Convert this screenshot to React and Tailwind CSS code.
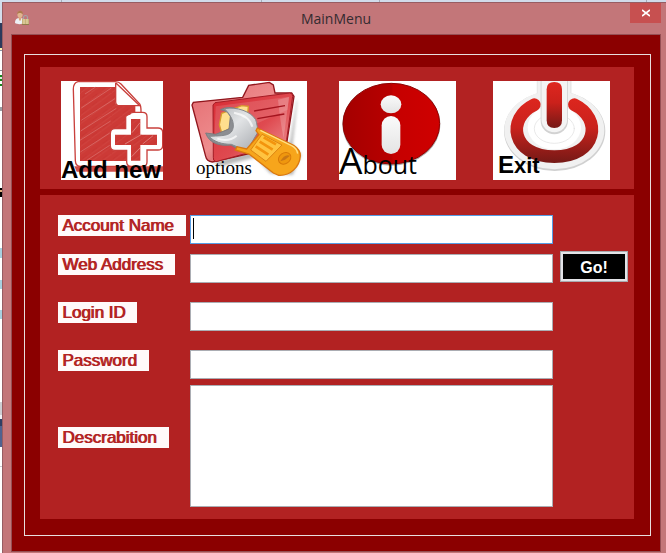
import React from "react";

const strip = [
  ["h-[23px]", "bg-[#d3ddeb]"], ["h-[25px]", "bg-[#2b3a5c]"], ["h-[2px]", "bg-[#fff2b0]"],
  ["h-[1px]", "bg-[#8a93a5]"], ["h-[19px]", "bg-white"], ["h-[1px]", "bg-[#8c9099]"],
  ["h-[4px]", "bg-white"], ["h-[2px]", "bg-[#15841a]"], ["h-[2px]", "bg-[#d9efd9]"],
  ["h-[2px]", "bg-[#15841a]"], ["h-[3px]", "bg-white"], ["h-[2px]", "bg-[#15841a]"],
  ["h-[21px]", "bg-white"], ["h-[4px]", "bg-[#9a9da3]"], ["h-[77px]", "bg-white"],
  ["h-[2px]", "bg-black"], ["h-[2px]", "bg-[#e0b080]"], ["h-[5px]", "bg-black"],
  ["h-[51px]", "bg-white"], ["h-[10px]", "bg-[#a8d0df]"], ["h-[22px]", "bg-white"],
  ["h-[9px]", "bg-[#a8d0df]"], ["h-[21px]", "bg-white"], ["h-[9px]", "bg-[#a8d0df]"],
  ["h-[83px]", "bg-white"], ["h-[13px]", "bg-[#cdced3]"], ["h-[4px]", "bg-[#eef0f5]"],
  ["h-[7px]", "bg-[#2f3e63]"], ["h-[21px]", "bg-[#4f6290]"], ["h-[19px]", "bg-white"],
  ["h-[1px]", "bg-[#c9cbd0]"],
];

function UserIcon() {
  return (
    <svg className="h-4 w-4" viewBox="0 0 16 16" aria-hidden="true">
      <path d="M1 13c0-4 2-5 5-5s4 2 4 5c-2 1.5-7 1.5-9 0Z" fill="#edf0f5" />
      <path d="M4.5 7h3l-.5 3-1 1-1-1Z" fill="#d9a67d" />
      <ellipse cx="6" cy="4.5" rx="2.6" ry="3.3" fill="#e0b58f" />
      <path d="M3.2 4.5C2.5 0 9.5-.8 8.9 4.2 7.5 3 5 2 3.2 4.5Z" fill="#ad7a4e" />
      <path d="M9.5 9V7.5c0-2.6 4-2.6 4 0V9" fill="none" stroke="#a5a5a5" strokeWidth="1.1" />
      <rect x="8" y="9" width="7" height="6" fill="#c7b17a" />
      <path d="M10 9v6M13 9v6" stroke="#eadcae" />
      <path d="M8 14.5h7" stroke="#8f7b4a" />
    </svg>
  );
}

function AddArt() {
  const cross = "M240 132q3-5 12-5h26q13 0 13 13v34h33q14 0 14 13v40q0 13-14 13h-33v36q0 13-13 13h-33q-15 0-15-13v-35h-35q-14 0-14-14v-36q0-15 14-15h32v-35q0-5 13-9Z";
  return (
    <svg className="block h-full w-full" viewBox="33 33 306 297" preserveAspectRatio="none" aria-hidden="true">
      <defs>
        <pattern id="sketch" width="31" height="23" patternUnits="userSpaceOnUse">
          <rect width="31" height="23" fill="#cc3a36" />
          <path d="M-2 23 31-1" stroke="#d4524d" strokeWidth="1.3" />
          <path d="M2 14 18 2" stroke="#c6322f" strokeWidth="2" />
        </pattern>
      </defs>
      <path d="M73 289h266v16H80Z" fill="#c9302c" opacity=".85" />
      <path d="M84 35h112q10 0 17 7l56 60q4 5 4 22v148q0 17-16 17H92q-15 0-16-17L70 58q0-20 14-23Z" fill="#fff" stroke="#c9403c" strokeWidth="4" />
      <path d="M90 51h106v44q0 13 13 13h47v165H90Z" fill="url(#sketch)" />
      <path d="M105 72 137 51M94 114l90-60M94 151l101-65M92 183l107-68M90 211l92-58M91 246l93-60M110 271l80-52" stroke="#e29995" strokeWidth="1.3" />
      <path d="M197 38v57q0 12 12 12h61L205 40Z" fill="#fff" />
      <path d="M197 38v57q0 12 12 12h61M197 38l73 70" fill="none" stroke="#c9403c" strokeWidth="4" />
      <path d={cross} fill="#fff" stroke="#c9403c" strokeWidth="4" />
      <path d="M243 147h28v47h50v31h-50v47h-28v-47h-48v-31h48Z" fill="url(#sketch)" />
      <path d="m246 188 24-30M225 222l50-29M278 222l31-25M245 260l25-26" stroke="#e49a96" strokeWidth="2" />
    </svg>
  );
}

function OptionsArt() {
  return (
    <svg className="block h-full w-full" viewBox="30 33 351 297" preserveAspectRatio="none" aria-hidden="true">
      <defs>
        <linearGradient id="folderBack" x1="0" y1="0" x2="1" y2="1">
          <stop offset="0" stopColor="#e46b70" /><stop offset=".5" stopColor="#ee8d8e" /><stop offset="1" stopColor="#a91d25" />
        </linearGradient>
        <linearGradient id="folderFront" x1="0" y1="0" x2="1" y2="1">
          <stop offset="0" stopColor="#d82b34" /><stop offset=".55" stopColor="#df4a50" /><stop offset="1" stopColor="#f0a0a1" />
        </linearGradient>
        <linearGradient id="steel" x1="0" y1="0" x2="1" y2="1">
          <stop offset="0" stopColor="#aeb1b5" /><stop offset=".45" stopColor="#e2e4e6" /><stop offset="1" stopColor="#a5a8ad" />
        </linearGradient>
        <filter id="softShade"><feGaussianBlur stdDeviation="5" /></filter>
      </defs>
      <path d="m100 275 230-60 20-125 2 3-14 130 26 32-26 60-68-5-42-48-105 27Z" fill="#888" opacity=".6" filter="url(#softShade)" />
      <path d="m36 105 4-8 148-15 18-36 62-9 12 8 5 24 50 0 7 10-23 147-222 50q-17-2-20-17Z" fill="url(#folderBack)" stroke="#91161d" strokeWidth="4" />
      <path d="m99 105 6-7 224-29q10 0 9 10l-18 130q-2 9-11 11L108 275q-10-3-8-13Z" fill="url(#folderFront)" stroke="#a51c25" strokeWidth="3" />
      <path d="m107 109 221-29-5 39-220 99Z" fill="#fff" opacity=".13" />
      <path d="M294 89q7 70 17 116l16-124Z" fill="#fff" opacity=".2" />
      <path d="m222 123 93-16M232 146l81-14" stroke="#a4141e" strokeWidth="4" />
      <path d="m125 130 60-23 20 2-3 35-77 45-7-25Z" fill="#ffdf8e" stroke="#d79b2e" strokeWidth="4" />
      <path d="M121 119c32-16 69 1 86 23 12 14 14 22 26 36l-46 67-34-20c-27 4-65-2-76-36l30 4 40-16 4-37q-7-18-30-21Z" fill="#8c8e92" stroke="#7b7d81" strokeWidth="3" />
      <path d="M133 116c38-7 80 9 94 33 5 13 3 24 10 32l-37 62-46-20c-27 0-51-7-67-24 24-2 55 1 67-13 13-18 5-45-21-70Z" fill="url(#steel)" stroke="#85888c" strokeWidth="3" />
      <path d="M162 128q46 9 55 42M112 206q34 11 58-9" stroke="#fff" strokeWidth="6" fill="none" opacity=".7" />
      <path d="m232 174 109 52q20 13 20 31c-2 33-29 61-65 59l-16-7-73-57-41-12 5-10 29 7 37-43-9-12Z" fill="#f7a51b" stroke="#da780f" strokeWidth="4" />
      <path d="m246 193 60 32-48 49-46-34Z" fill="#ffc340" stroke="#dc8513" strokeWidth="3" />
      <path d="m251 202 37 21M239 215l39 24M227 229l38 25" stroke="#f3940d" strokeWidth="8" />
      <ellipse cx="314" cy="265" rx="20" ry="16" transform="rotate(-35 314 265)" fill="#ef970e" stroke="#d87a08" strokeWidth="3" />
      <path d="M301 274q13-24 29-17l-15 12Z" fill="#c97715" />
      <path d="m241 181 94 46q16 8 18 24" fill="none" stroke="#ffe084" strokeWidth="4" />
    </svg>
  );
}

function AboutArt() {
  return (
    <svg className="block h-full w-full" viewBox="27 33 351 297" preserveAspectRatio="none" aria-hidden="true">
      <defs>
        <linearGradient id="infoRed"><stop offset="0" stopColor="#a40000" /><stop offset=".5" stopColor="#b80000" /><stop offset=".52" stopColor="#c50000" /><stop offset="1" stopColor="#cf0000" /></linearGradient>
        <linearGradient id="infoWhite" x1="0" y1="0" x2="0" y2="1"><stop stopColor="#fafafa" /><stop offset="1" stopColor="#e4e4e4" /></linearGradient>
      </defs>
      <ellipse cx="184" cy="163" rx="147" ry="124" fill="#aaa" />
      <ellipse cx="184" cy="161" rx="145" ry="121" fill="url(#infoRed)" stroke="#920000" strokeWidth="3" />
      <ellipse cx="183" cy="103" rx="31" ry="27" fill="url(#infoWhite)" />
      <rect x="155" y="138" width="56" height="114" rx="28" fill="url(#infoWhite)" />
    </svg>
  );
}

function ExitArt() {
  return (
    <svg className="block h-full w-full" viewBox="24 33 351 297" preserveAspectRatio="none" aria-hidden="true">
      <defs>
        <linearGradient id="powerRed" gradientUnits="userSpaceOnUse" x1="0" y1="85" x2="0" y2="280"><stop stopColor="#dd261e" /><stop offset=".45" stopColor="#c9221c" /><stop offset="1" stopColor="#741916" /></linearGradient>
        <linearGradient id="stemRed" gradientUnits="userSpaceOnUse" x1="0" y1="35" x2="0" y2="175"><stop stopColor="#df271f" /><stop offset=".45" stopColor="#cb211b" /><stop offset="1" stopColor="#741916" /></linearGradient>
      </defs>
      <g strokeLinecap="round">
        <ellipse cx="209" cy="183" rx="152" ry="120" fill="#d0d0d0" />
        <path d="M158 30h100v60H158Z" fill="#f1f1f1" stroke="#d8d8d8" strokeWidth="2" />
        <ellipse cx="208" cy="180" rx="150" ry="118" fill="#f1f1f1" />
        <ellipse cx="208" cy="172" rx="80" ry="66" fill="#fff" />
        <ellipse cx="208" cy="176" rx="60" ry="44" fill="#fff" stroke="#dedede" strokeWidth="2" />
        <path d="M208 33V152" stroke="#d2d2d2" strokeWidth="82" />
        <path d="M208 32V148" stroke="#f4f4f4" strokeWidth="77" />
        <path d="M148 104C64 144 78 260 208 260S352 144 268 104" fill="none" stroke="url(#powerRed)" strokeWidth="38" />
        <path d="M185 58q0-22 23-22t23 22v93q0 23-23 23t-23-23Z" fill="url(#stemRed)" />
      </g>
    </svg>
  );
}

function Tile({ art, className, caption }) {
  return (
    <button type="button" className={`relative block h-[99px] bg-white text-black ${className}`}>
      {art}
      {caption}
    </button>
  );
}

const labelClass = "justify-self-start bg-[#fffafa] pr-3 pl-1 pt-px text-[17px] leading-5 whitespace-nowrap text-[#b22222] [text-shadow:1px_0_0_#b22222]";
const inputClass = "h-[29px] w-full min-w-0 border bg-white px-1 text-[16px] text-black outline-none";

function Field({ id, label, type = "text", active, className, children }) {
  return (
    <div className={`grid grid-cols-[132px_minmax(0,1fr)_75px] items-start ${className}`}>
      <label htmlFor={id} className={labelClass}>{label}</label>
      <div className="relative">
        <input id={id} type={type} className={`${inputClass} ${active ? "border-[#569de5]" : "border-[#abadb3]"}`} />
        {active && <span className="absolute top-[3px] left-[3px] h-[21px] w-px bg-black" />}
      </div>
      {children}
    </div>
  );
}

export default function App() {
  return (
    <div className="flex min-h-screen overflow-hidden bg-white font-['Liberation_Sans',Arial,sans-serif]">
      <div className="w-[2px] shrink-0" aria-hidden="true">
        {strip.map(([height, color], i) => <div key={i} className={`${height} ${color}`} />)}
      </div>
      <div className="flex min-w-0 flex-1 flex-col">
        <div className="flex h-[2px] bg-[#d1dbea]" aria-hidden="true">
          <div className="w-[60px] border-r border-[#a6acb8]" />
          <div className="w-[200px] border-r border-[#a6acb8]" />
          <div className="w-[118px] border-r border-[#a6acb8]" />
          <div className="w-[267px] border-r border-[#a6acb8]" />
        </div>
        <div className="flex-1 border-t border-l border-[#975d63] bg-[#c37679] pr-[5px] pl-2">
          <header className="grid h-[31px] grid-cols-[1fr_auto_1fr] items-start">
            <div className="pt-[7px] pl-[3px]"><UserIcon /></div>
            <h1 className="pt-[6px] font-['Open_Sans','Noto_Sans',sans-serif] text-[14px] leading-5 text-[#332b30]">MainMenu</h1>
            <button type="button" aria-label="Close" className="flex h-5 w-[31px] items-center justify-center justify-self-end bg-[#c75050]">
              <svg className="h-2 w-2" viewBox="0 0 8 8"><path d="m0 1 8 6M8 1 0 7" stroke="#fff" strokeWidth="1.7" /></svg>
            </button>
          </header>
          <main className="border border-[#964f54] bg-[#8b0000] pt-[19px] pr-[9px] pb-[15px] pl-3">
            <div className="border border-[#e8dede] pt-3 pr-4 pb-4 pl-[15px]">
              <nav className="grid grid-cols-[129fr_149fr_154fr_117fr] bg-[#b22222] pt-[14px] pr-6 pb-[9px] pl-[21px]" aria-label="Main actions">
                <Tile className="w-[102px]" art={<AddArt />} caption={
                  <span className="absolute bottom-0 left-0 text-[24px] leading-5 font-bold whitespace-nowrap">Add new</span>} />
                <Tile className="w-[117px]" art={<OptionsArt />} caption={
                  <span className="absolute bottom-1 left-[6px] font-['Liberation_Serif',serif] text-[19px] leading-4">options</span>} />
                <Tile className="w-[117px]" art={<AboutArt />} caption={
                  <span className="absolute bottom-0 left-0 flex items-baseline font-['Open_Sans',sans-serif] font-medium"><span className="text-[37px] leading-8">A</span><span className="text-[25px] leading-8">bout</span></span>} />
                <Tile className="w-[117px]" art={<ExitArt />} caption={
                  <span className="absolute bottom-1 left-[5px] flex items-baseline font-bold"><span className="text-[24px] leading-5">E</span><span className="text-[22px] leading-5">xit</span></span>} />
              </nav>
              <form className="mt-[6px] bg-[#b22222] pt-5 pr-[6px] pb-3 pl-[18px]" onSubmit={(e) => e.preventDefault()}>
                <Field id="account" label="Account Name" active className="h-[39px]" />
                <Field id="web" label="Web Address" className="h-12">
                  <button type="button" className="-mt-[3px] ml-[7px] h-[31px] border border-[#a9a9ad] bg-[#e3e3e8] p-[2px] text-[16px] font-bold text-white">
                    <span className="flex h-full items-center justify-center bg-black pt-[2px]">Go!</span>
                  </button>
                </Field>
                <Field id="login" label="Login ID" className="h-12" />
                <Field id="password" label="Password" type="password" className="h-[35px]" />
                <div className="grid grid-cols-[132px_minmax(0,1fr)_75px] items-start">
                  <label htmlFor="description" className={`${labelClass} mt-[42px]`}>Descrabition</label>
                  <textarea id="description" className="block h-[122px] w-full resize-none border border-[#abadb3] bg-white px-1 text-[16px] text-black outline-none" />
                </div>
              </form>
            </div>
          </main>
        </div>
      </div>
    </div>
  );
}
